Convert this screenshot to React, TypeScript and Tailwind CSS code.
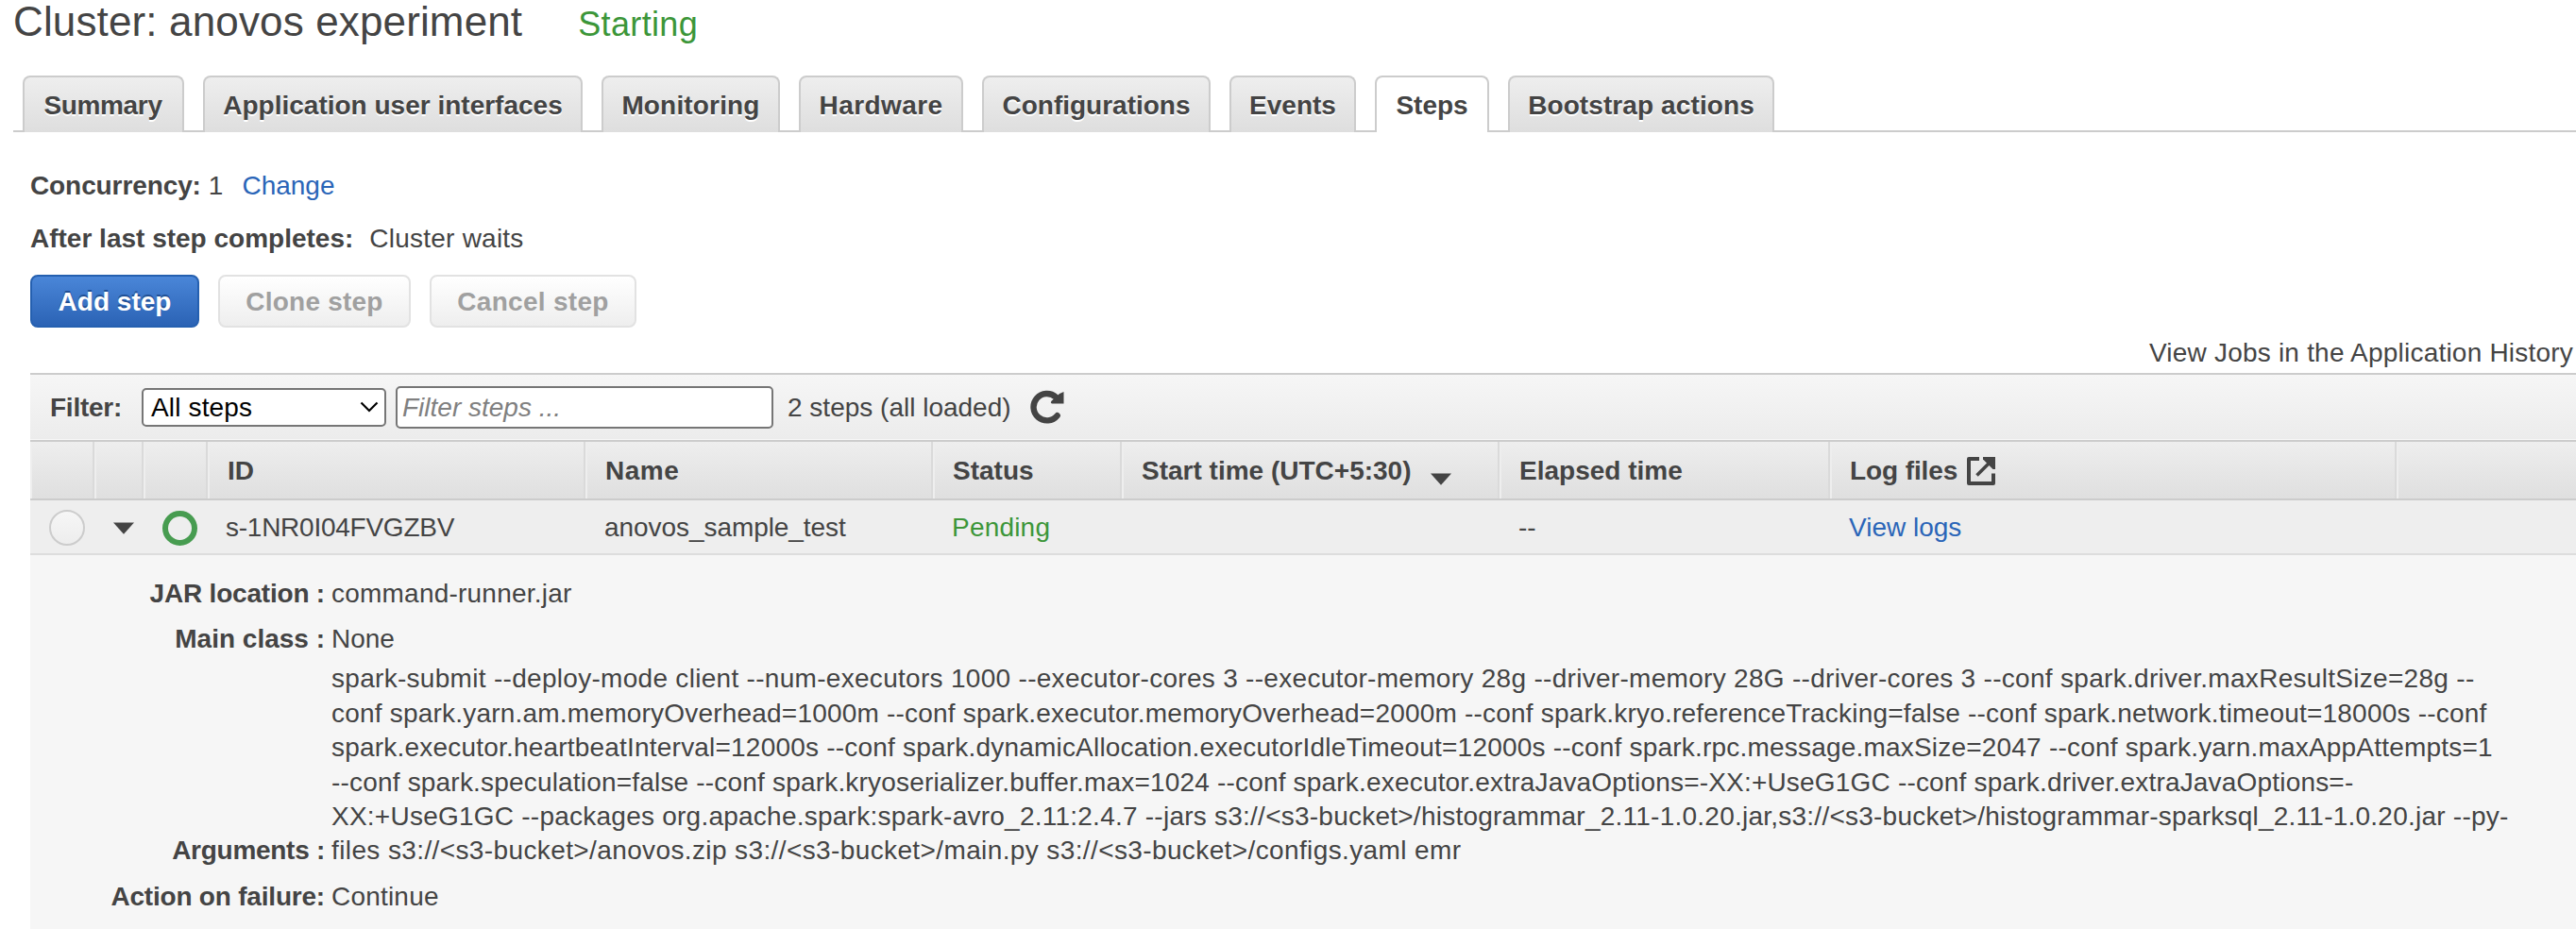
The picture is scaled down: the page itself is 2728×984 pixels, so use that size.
import type { ReactNode } from "react";

const tabs = [
  { label: "Summary", size: "w-[171px] tracking-[-0.34px] pr-px" },
  { label: "Application user interfaces", size: "w-[402px]" },
  { label: "Monitoring", size: "w-[189px] tracking-[0.16px]" },
  { label: "Hardware", size: "w-[174px] tracking-[0.42px]" },
  { label: "Configurations", size: "w-[242px]" },
  { label: "Events", size: "w-[134px]" },
  { label: "Steps", size: "w-[121px]", active: true },
  { label: "Bootstrap actions", size: "w-[282px] tracking-[0.1px]" },
];

const argumentLines = [
  { text: "spark-submit --deploy-mode client --num-executors 1000 --executor-cores 3 --executor-memory 28g --driver-memory 28G --driver-cores 3 --conf spark.driver.maxResultSize=28g --", tracking: "tracking-[0.297px]" },
  { text: "conf spark.yarn.am.memoryOverhead=1000m --conf spark.executor.memoryOverhead=2000m --conf spark.kryo.referenceTracking=false --conf spark.network.timeout=18000s --conf", tracking: "tracking-[0.208px]" },
  { text: "spark.executor.heartbeatInterval=12000s --conf spark.dynamicAllocation.executorIdleTimeout=12000s --conf spark.rpc.message.maxSize=2047 --conf spark.yarn.maxAppAttempts=1", tracking: "tracking-[0.204px]" },
  { text: "--conf spark.speculation=false --conf spark.kryoserializer.buffer.max=1024 --conf spark.executor.extraJavaOptions=-XX:+UseG1GC --conf spark.driver.extraJavaOptions=-", tracking: "tracking-[0.187px]" },
  { text: "XX:+UseG1GC --packages org.apache.spark:spark-avro_2.11:2.4.7 --jars s3://<s3-bucket>/histogrammar_2.11-1.0.20.jar,s3://<s3-bucket>/histogrammar-sparksql_2.11-1.0.20.jar --py-", tracking: "tracking-[0.240px]" },
  { text: "files s3://<s3-bucket>/anovos.zip s3://<s3-bucket>/main.py s3://<s3-bucket>/configs.yaml emr", tracking: "tracking-[0.385px]" },
];

function Caret() {
  return (
    <svg width="22" height="13" viewBox="0 0 22 13" className="shrink-0">
      <path d="M0 0.5h22L11 12.8z" fill="#444" />
    </svg>
  );
}

function RefreshIcon() {
  return (
    <svg width="36" height="36" viewBox="0 0 36 36" className="ml-[20px] shrink-0">
      <path d="M28.7 27.2A14.2 14.2 0 1 1 27.2 7.6" fill="none" stroke="#444" strokeWidth="6.4" strokeLinecap="round" />
      <path d="M35.5 2v12.6H23q-2-1-.5-2.900L31 4z" fill="#444" />
    </svg>
  );
}

function ExternalIcon() {
  return (
    <svg width="30" height="30" viewBox="0 0 30 30" className="ml-[10px] shrink-0" fill="none" stroke="#444" strokeWidth="4">
      <path d="M13 2H2v26h26V17.500" strokeLinejoin="round" />
      <path d="M10.500 19.500L25 5" strokeWidth="3.600" />
      <path d="M17 0h13v13h-2.500L17 2.600z" fill="#444" stroke="none" />
    </svg>
  );
}

function HeaderCell({ width, children }: { width: string; children?: ReactNode }) {
  return (
    <div className={`flex shrink-0 items-center border-r-2 border-l-2 border-r-[#dadada] border-l-[#eeeeee] pt-[2px] pl-[19px] font-bold ${width}`}>
      {children}
    </div>
  );
}

function Detail({ label, tracking = "", children, className = "" }: { label: string; tracking?: string; children: ReactNode; className?: string }) {
  return (
    <div className={`flex items-end leading-[36.4px] ${className}`}>
      <div className={`w-[312px] shrink-0 text-right font-bold ${tracking}`}>{label}</div>
      <div className="ml-[7px] whitespace-nowrap">{children}</div>
    </div>
  );
}

export default function App() {
  return (
    <div className="flex h-[984px] w-[2728px] flex-col bg-white font-['Liberation_Sans',Arial,sans-serif] text-[28px] leading-9 whitespace-nowrap text-[#444]">
      <header className="flex h-20 items-baseline pl-[14px] leading-[45px]">
        <h1 className="text-[44px] tracking-[0.14px]">Cluster: anovos experiment</h1>
        <span className="ml-[59px] text-[36px] tracking-[0.35px] text-[#3c9639]">Starting</span>
      </header>

      <nav className="ml-[14px] flex h-[60px] shrink-0 gap-5 border-b-2 border-[#ccc] pl-[10px]">
        {tabs.map((tab) => (
          <div
            key={tab.label}
            className={`-mb-[2px] flex h-[60px] shrink-0 items-center justify-center rounded-t-lg border-x-2 border-t-2 border-[#ccc] pt-px font-bold ${tab.size} ${tab.active ? "bg-white" : "bg-linear-to-b from-[#eeeeee] to-[#dedede] [text-shadow:0_2px_0_#fff]"}`}
          >
            {tab.label}
          </div>
        ))}
      </nav>

      <section className="flex flex-col pl-8">
        <div className="mt-[39px] flex h-9 items-center">
          <b className="tracking-[-0.1px]">Concurrency:</b>
          <span className="ml-[8px]">1</span>
          <a className="ml-[20px] text-[#2a65b8]">Change</a>
        </div>
        <div className="mt-5 flex h-9 items-center">
          <b>After last step completes:</b>
          <span className="ml-[17px] tracking-[0.23px]">Cluster waits</span>
        </div>
        <div className="mt-5 flex h-14 gap-5 font-bold">
          <button className="w-[179px] rounded-lg border-2 border-[#2560b0] bg-linear-to-b from-[#4a86d8] to-[#2b63b5] pt-[2px] text-white [text-shadow:0_-2px_0_#1f4f94]">Add step</button>
          <button className="w-[204px] rounded-lg border-2 border-[#e2e2e2] bg-linear-to-b from-white to-[#eeeeee] pt-[2px] tracking-[0.22px] text-[#a0a0a0]">Clone step</button>
          <button className="w-[219px] rounded-lg border-2 border-[#e2e2e2] bg-linear-to-b from-white to-[#eeeeee] pt-[2px] tracking-[0.29px] text-[#a0a0a0]">Cancel step</button>
        </div>
        <div className="mt-[9px] flex h-[39px] justify-end pr-[3px] tracking-[0.21px]">View Jobs in the Application History</div>
      </section>

      <section className="ml-8 flex flex-1 flex-col bg-[#f6f6f6]">
        <div className="flex h-[71px] shrink-0 items-center border-t-2 border-b border-t-[#ccc] border-b-[#f8f8f8] bg-linear-to-b from-[#f6f6f6] to-[#ececec] pl-[21px]">
          <b className="w-[97px] pt-px tracking-[-0.24px]">Filter:</b>
          <div className="flex h-[41px] w-[259px] items-center justify-between rounded-[5px] border-2 border-[#767676] bg-white pr-[6px] pl-2 tracking-[0.15px] text-black">
            <span className="pt-px">All steps</span>
            <svg width="20" height="12" viewBox="0 0 20 12" fill="none" stroke="black" strokeWidth="2.200">
              <path d="M1.500 1.500L10 10l8.500-8.500" />
            </svg>
          </div>
          <div className="ml-[10px] flex h-[45px] w-[400px] items-center rounded-[5px] border-2 border-[#767676] bg-white pl-[5px] text-[#808080] italic"><span className="pt-px">Filter steps ...</span></div>
          <span className="ml-[15px] pt-px">2 steps (all loaded)</span>
          <RefreshIcon />
        </div>

        <div className="flex h-[64px] shrink-0 border-y-2 border-[#ccc] bg-linear-to-b from-[#eeeeee] to-[#dfdfdf]">
          <HeaderCell width="w-[68px]" />
          <HeaderCell width="w-[52px]" />
          <HeaderCell width="w-[68px]" />
          <HeaderCell width="w-[400px]">ID</HeaderCell>
          <HeaderCell width="w-[368px]"><span className="tracking-[0.5px]">Name</span></HeaderCell>
          <HeaderCell width="w-[200px]">Status</HeaderCell>
          <HeaderCell width="w-[400px]">
            Start time (UTC+5:30)
            <div className="mt-[16px] ml-[20px]"><Caret /></div>
          </HeaderCell>
          <HeaderCell width="w-[350px]">Elapsed time</HeaderCell>
          <HeaderCell width="w-[600px]">
            <span className="tracking-[-0.1px]">Log files</span>
            <ExternalIcon />
          </HeaderCell>
          <div className="flex-1 border-l-2 border-[#eeeeee]" />
        </div>

        <div className="flex h-[58px] shrink-0 items-center border-b-2 border-[#ddd] bg-[#eee]">
          <div className="w-[88px] pt-px pl-5">
            <div className="size-[38px] rounded-full border-2 border-[#ccc] bg-linear-to-b from-[#f6f6f6] to-[#ededed]" />
          </div>
          <div className="w-[52px] pt-[3px]"><Caret /></div>
          <div className="w-[67px] pt-[2px]">
            <div className="size-[37px] rounded-full border-[6px] border-[#479c50]" />
          </div>
          <div className="w-[401px] pt-[2px] tracking-[-0.25px]">s-1NR0I04FVGZBV</div>
          <div className="w-[368px] pt-[2px] tracking-[-0.06px]">anovos_sample_test</div>
          <div className="w-[600px] pt-[2px] tracking-[0.2px] text-[#3c9639]">Pending</div>
          <div className="w-[350px] pt-[2px]">--</div>
          <a className="pt-[2px] text-[#2a65b8]">View logs</a>
        </div>

        <div className="flex flex-col pt-[23px]">
          <Detail label="JAR location :" tracking="tracking-[-0.2px]"><span className="tracking-[0.22px]">command-runner.jar</span></Detail>
          <Detail label="Main class :" className="mt-[11.600px]">None</Detail>
          <Detail label="Arguments :" tracking="tracking-[-0.28px]" className="mt-[6px]">
            {argumentLines.map((line) => (
              <div key={line.text} className={line.tracking}>{line.text}</div>
            ))}
          </Detail>
          <Detail label="Action on failure:" tracking="tracking-[-0.2px]" className="mt-[12.600px]"><span className="tracking-[0.2px]">Continue</span></Detail>
        </div>
      </section>
    </div>
  );
}
